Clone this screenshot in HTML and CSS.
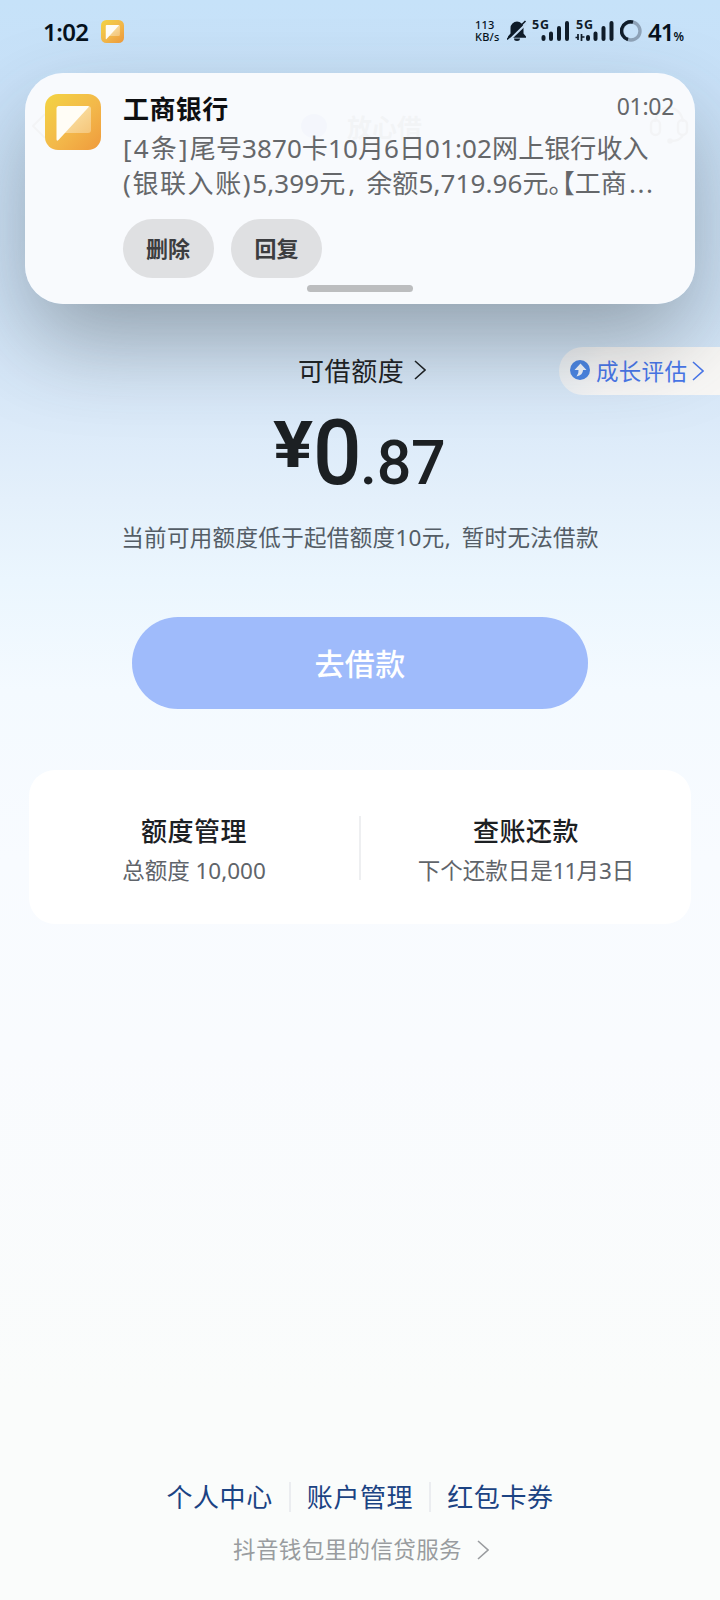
FILE: index.html
```html
<!DOCTYPE html>
<html lang="zh-CN">
<head>
<meta charset="utf-8">
<title>放心借</title>
<link rel="stylesheet" href="styles.css">
</head>
<body>
<svg width="0" height="0" class="defs">
  <defs>
    <linearGradient id="gold" x1="0" y1="0" x2="1" y2="1"><stop offset="0" stop-color="#f3d443"/><stop offset=".55" stop-color="#f3b84a"/><stop offset="1" stop-color="#ef9a3c"/></linearGradient>
    <linearGradient id="fold" x1="0" y1="0" x2="1" y2="1"><stop offset=".4" stop-color="#f9dc9c"/><stop offset="1" stop-color="#f5c57a"/></linearGradient>
    <symbol id="logo" viewBox="0 0 56 56">
      <rect width="56" height="56" rx="13" fill="url(#gold)"/>
      <path d="M13 12h30q3 0 3 3v21q0 3-3 3H18z" fill="url(#fold)"/>
      <path d="M14 12h29q1.500 0 .5 1.200L13.500 46q-2 2-2-1V14.500q0-2.500 2.500-2.500z" fill="#fffdf6"/>
    </symbol>
    <symbol id="chevron" viewBox="0 0 12 20"><path d="M1 1l10 9-10 9" fill="none" stroke="currentColor" stroke-width="1.600"/></symbol>
  </defs>
</svg>
<div class="screen">
  <header class="status">
    <span class="clock">1:02</span>
    <svg class="mini-logo"><use href="#logo"/></svg>
    <div class="status-right">
      <span class="speed">113<br>KB/s</span>
      <svg class="bell" viewBox="0 0 20 22"><path d="M10 1.500a6.500 6.500 0 0 1 6.500 6.500v5.500l2.500 3v1.200H1v-1.200l2.500-3V8A6.500 6.500 0 0 1 10 1.500zM7 18.500h6a3 2.500 0 0 1-6 0z" fill="#101d2a"/><path d="M3 19.500L20 3" stroke="#c4dcf3" stroke-width="2"/><path d="M0 19.500L18.500 1" stroke="#101d2a" stroke-width="1.600"/></svg>
      <svg class="signal first" viewBox="0 0 38 22"><text x="0" y="8.500" textLength="17">5G</text><path d="M11.500 17v2M19 13.500v5.500M27 8v11M35 3v16" class="bars"/></svg>
      <svg class="signal" viewBox="0 0 38 22"><text x="0" y="8.500" textLength="17">5G</text><path d="M12 17v2M19.500 13.500v5.500M27.500 8v11M35.500 3v16" class="bars"/><path d="M2 14v6M5.500 14v7" stroke="#101d2a" stroke-width="1.700"/><path d="M-.5 17.500h3M5.500 17h3" stroke="#101d2a" stroke-width="1.700"/></svg>
      <svg class="ring" viewBox="0 0 22 22"><circle cx="11" cy="11" r="9" fill="none" stroke="#8fa3b8" stroke-width="3.400"/><path d="M13 2.200A9 9 0 1 0 8 19.500" fill="none" stroke="#101d2a" stroke-width="3.400"/></svg>
      <span class="battery">41<small>%</small></span>
    </div>
  </header>

  <nav class="appbar">
    <svg class="back" viewBox="0 0 14 26"><path d="M13 1L1 13l12 12" fill="none" stroke="#333" stroke-width="2"/></svg>
    <div class="brand"><i class="brand-dot"></i><span>放心借</span></div>
    <svg class="headset" viewBox="0 0 40 38"><path d="M6 15C8-4 32-4 34 15M34 28q-3 6-12 6" fill="none" stroke="#333" stroke-width="2.500"/><rect x="2" y="13" width="9" height="15" rx="4.500" fill="none" stroke="#333" stroke-width="2.500"/><rect x="29" y="13" width="9" height="15" rx="4.500" fill="none" stroke="#333" stroke-width="2.500"/><circle cx="21" cy="34" r="2.800" fill="#333"/></svg>
  </nav>

  <main>
    <section class="quota">
      <div class="quota-title">可借额度<svg class="chev"><use href="#chevron"/></svg></div>
      <a class="growth"><svg class="up" viewBox="0 0 20 20"><circle cx="10" cy="10" r="10" fill="#4a86e6"/><path d="M10.500 3.500l6 6.500h-3.500q0 5-6.500 6.500 2.500-3 2-6.500H4.500z" fill="#f2f8ff"/></svg><span>成长评估</span><svg class="chev"><use href="#chevron"/></svg></a>
      <div class="amount"><span class="yen">¥</span><span class="whole">0</span><span class="cents">.87</span></div>
      <p class="hint">当前可用额度低于起借额度<span class="n10">10</span>元<span class="comma">,</span>暂时无法借款</p>
    </section>
    <button class="borrow">去借款</button>
    <section class="card">
      <div class="cell"><h2>额度管理</h2><p>总额度 10,000</p></div>
      <i class="rule"></i>
      <div class="cell"><h2>查账还款</h2><p>下个还款日是<span class="n11">11</span>月3日</p></div>
    </section>
  </main>

  <footer>
    <div class="links"><a>个人中心</a><a>账户管理</a><a>红包卡券</a></div>
    <div class="service">抖音钱包里的信贷服务<svg class="chev"><use href="#chevron"/></svg></div>
  </footer>

  <aside class="notice">
    <svg class="notice-logo"><use href="#logo"/></svg>
    <div class="notice-body">
      <div class="notice-head"><strong>工商银行</strong><time>01:02</time></div>
      <p class="line"><span class="count">[4条]</span>尾号3870卡<span class="n10">10</span>月6日01:02网上银行收入</p>
      <p class="line"><span class="source">(银联入账)</span>5,399元<span class="comma wide">,</span>余额5,719.96元<span class="half">。【</span>工商<span class="dots">...</span></p>
      <div class="actions"><span>删除</span><span>回复</span></div>
    </div>
    <i class="handle"></i>
  </aside>
</div>
</body>
</html>
```
FILE: styles.css
```css
* { box-sizing: border-box; }
body { margin: 0; font-family: "Noto Sans", "Noto Sans CJK SC", sans-serif; color: #1c2023; }
p, h2 { margin: 0; }
.defs { position: absolute; }
.screen {
  position: relative; width: 720px; height: 1600px; overflow: hidden;
  display: flex; flex-direction: column;
  background: linear-gradient(180deg, #c6e2f9 0, #c9e1f8 100px, #cfe3f7 300px, #dbeaf9 420px, #e4f0fb 500px, #ebf6fe 580px, #f4faff 690px, #f8fbff 860px, #f9fbfe 1050px, #fafcfb 1400px, #fafcfb 1600px);
}

.status { height: 72px; padding: 0 35px 10px 43px; display: flex; align-items: center; color: #06121d; }
.clock { font: 600 24px "Noto Sans", sans-serif; letter-spacing: -.6px; width: 58px; }
.mini-logo { width: 23px; height: 23px; }
.status-right { margin-left: auto; display: flex; align-items: center; }
.speed { font: 500 11px/12px "Noto Sans", sans-serif; width: 32px; letter-spacing: .2px; }
.bell { width: 20px; height: 22px; }
.signal { width: 38px; height: 22px; overflow: visible; margin-left: 6px; }
.signal.first { margin-left: 5px; }
.signal text { font: 700 12.500px "Noto Sans", sans-serif; fill: #101d2a; }
.bars { stroke: #101d2a; stroke-width: 4; stroke-linecap: round; }
.ring { width: 22px; height: 22px; margin-left: 6px; }
.battery { font: 600 24px "Noto Sans", sans-serif; margin-left: 6px; letter-spacing: -1px; width: 37px; white-space: nowrap; }
.battery small { font-size: 12px; }

.appbar { height: 108px; padding: 0 31px 0 32px; display: flex; justify-content: space-between; align-items: center; opacity: .8; }
.back { width: 14px; height: 26px; }
.headset { width: 40px; height: 38px; }
.brand { display: flex; align-items: center; gap: 20px; margin-left: 28px; font-size: 25px; font-weight: 700; }
.brand-dot { width: 26px; height: 24px; border-radius: 50%; background: #4a76d0; }

.quota { position: relative; padding-top: 173px; text-align: center; }
.quota-title { height: 34px; display: flex; align-items: center; padding-left: 298px; font-size: 26px; letter-spacing: .6px; }
.chev { width: 12px; height: 20px; }
.quota-title .chev { margin-left: 10px; }
.growth {
  position: absolute; right: 0; top: 167px; width: 161px; height: 48px; padding-left: 11px;
  border-radius: 24px 0 0 24px; display: flex; align-items: center; background: linear-gradient(90deg, #eef2f6, #f9f8f8 30%, #f9f8f6);
  color: #4877ec; font-size: 22.500px; letter-spacing: .3px; white-space: nowrap;
}
.growth span { padding-bottom: 2px; }
.up { width: 20px; height: 20px; margin: 0 6px 2px 0; }
.growth .chev { margin-left: 5px; }
.amount { height: 101px; padding: 22px 0 0 267px; display: flex; align-items: flex-start; font-family: Roboto, sans-serif; font-weight: 500; line-height: 1; }
.yen { font-size: 64px; font-weight: 700; width: 46px; margin-top: 5px; transform: scaleX(1.17); transform-origin: 10% 50%; }
.whole { font-size: 90px; width: 49px; transform: scaleX(.95); transform-origin: 0 50%; }
.cents { font-size: 61px; margin-top: 24px; margin-left: -2px; letter-spacing: -.3px; }
.hint { margin-top: 33px; font-size: 22.500px; line-height: 34px; letter-spacing: .35px; color: #545d66; white-space: nowrap; }
.comma { display: inline-block; width: 17px; text-align: left; }
.comma.wide { width: 21px; padding-left: 3px; }
.borrow {
  display: block; width: 456px; height: 92px; margin: 62px auto 0; padding: 0 0 2px; border: 0; border-radius: 46px;
  background: #9fbbfb; color: #fff; font: 500 30px "Noto Sans CJK SC", sans-serif; letter-spacing: .3px;
}
.card { margin: 61px 29px 0; height: 154px; border-radius: 26px; background: #fff; display: flex; align-items: center; }
.cell { flex: 1; text-align: center; padding-top: 7px; }
.cell h2 { font-size: 26px; font-weight: 500; line-height: 40px; letter-spacing: .5px; }
.cell p { font-size: 22.500px; line-height: 40px; color: #60646a; }
.n11 { letter-spacing: -1px; }
.rule { width: 2px; height: 64px; margin-top: 2px; background: #eeeff1; }

footer { margin-top: auto; height: 120px; text-align: center; }
.links { height: 34px; display: flex; justify-content: center; align-items: center; color: #1b4383; font-size: 26px; line-height: 30px; letter-spacing: .6px; }
.links a { padding: 0 16px; }
.links a + a { border-left: 2px solid #ebedf0; }
.service { margin-top: 19px; font-size: 22.500px; line-height: 34px; letter-spacing: .4px; color: #999c9f; display: flex; justify-content: center; align-items: center; padding-left: 2px; }
.service .chev { margin-left: 15px; }

.notice {
  position: absolute; left: 25px; top: 73px; width: 670px; height: 231px; border-radius: 38px;
  padding: 21px 20px 0; display: flex; gap: 22px; background: rgba(250, 251, 253, .96);
  box-shadow: 0 40px 90px -6px rgba(50, 56, 56, .4);
}
.notice-logo { width: 56px; height: 56px; flex: none; }
.notice-body { flex: 1; min-width: 0; }
.notice-head { height: 37px; display: flex; justify-content: space-between; line-height: 30px; }
.notice-head strong { font-size: 26px; font-weight: 700; letter-spacing: .4px; color: #0e0f11; }
.notice-head time { font-size: 23px; line-height: 25px; color: #65676a; margin-right: 1px; letter-spacing: -.3px; }
.line { font-size: 26px; line-height: 35px; height: 35px; white-space: nowrap; letter-spacing: .1px; color: #65676a; }
.count { letter-spacing: 2.200px; }
.source { letter-spacing: 1.600px; }
.half { font-feature-settings: "halt"; }
.dots { letter-spacing: 1.500px; margin-left: 2px; }
.actions { display: flex; gap: 17.500px; margin: 18px 0 0 -.5px; }
.actions span { width: 91px; height: 59px; border-radius: 30px; background: #dfe0e2; text-align: center; font-size: 22px; line-height: 59px; font-weight: 700; color: #3c3d3f; }
.handle { position: absolute; left: 282px; bottom: 12px; width: 106px; height: 7px; border-radius: 4px; background: #bcbdbf; }
```
